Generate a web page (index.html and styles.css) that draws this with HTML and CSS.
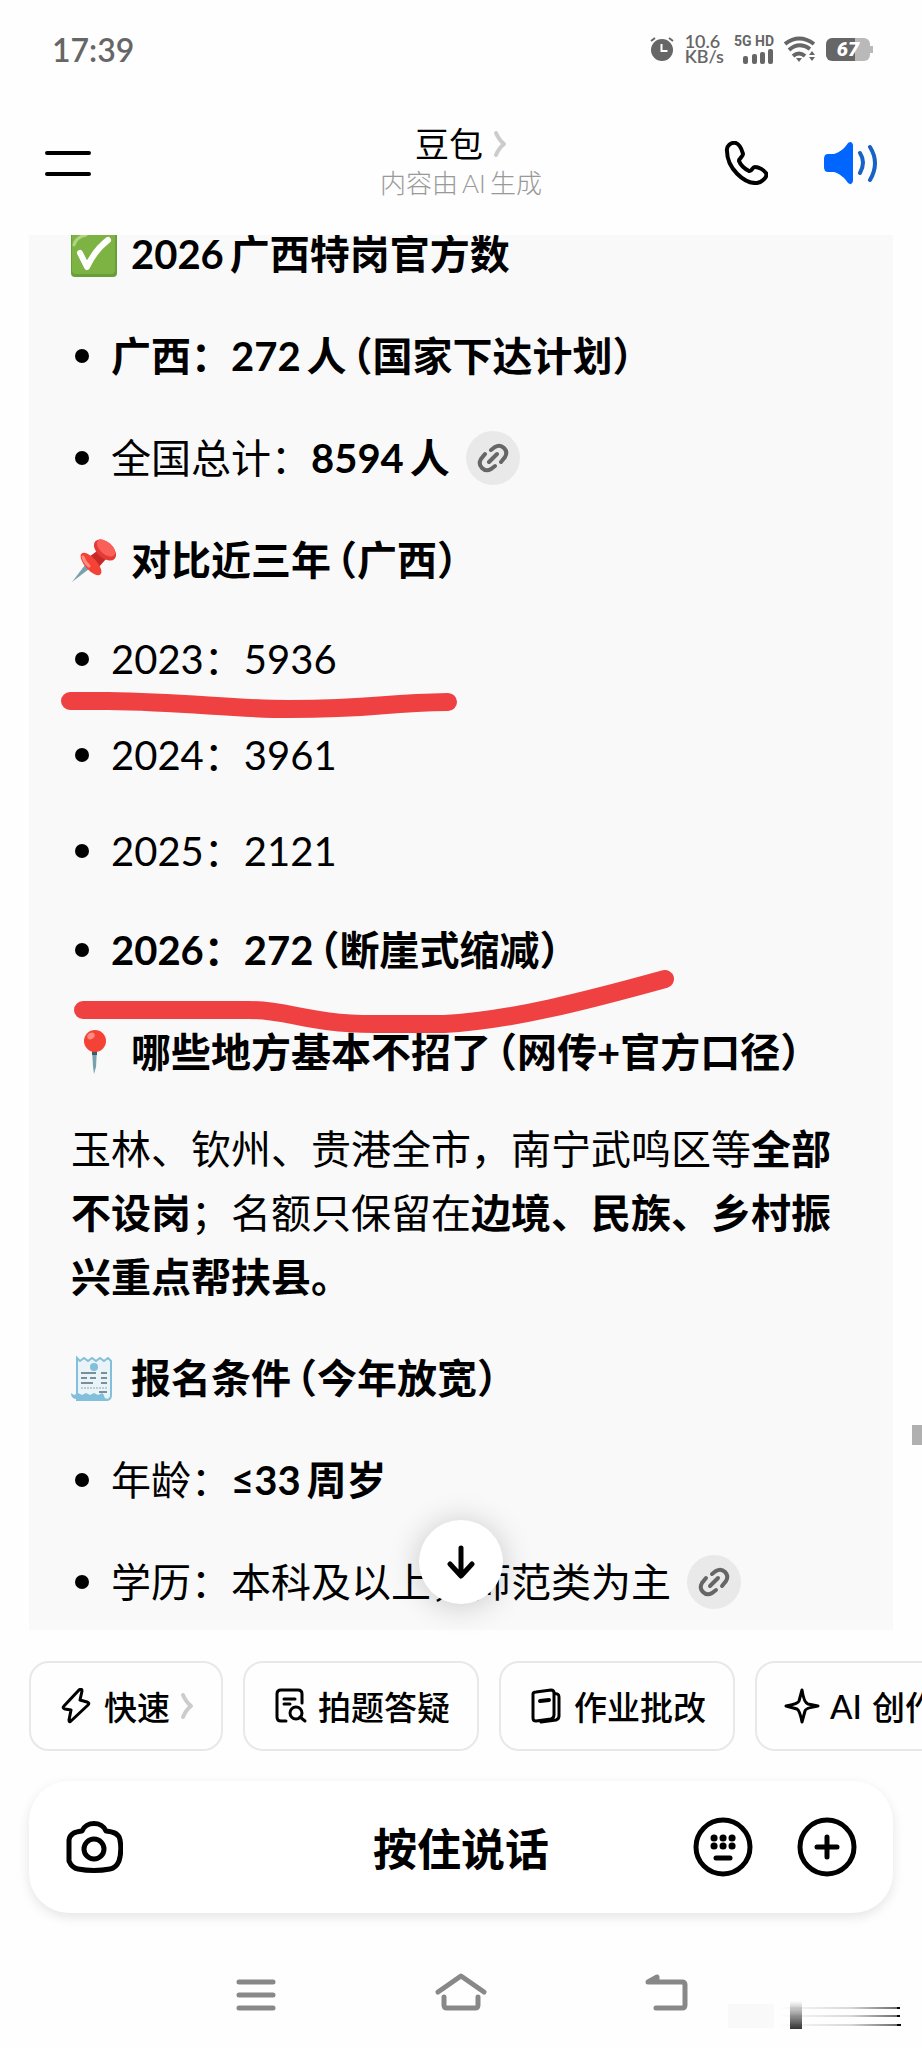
FILE: index.html
```
<!DOCTYPE html>
<html lang="zh-CN">
<head>
<meta charset="UTF-8">
<meta name="viewport" content="width=device-width, initial-scale=1">
<title>豆包</title>
<link rel="stylesheet" href="styles.css">
</head>

<body>
  <div class="statusbar">
    <span class="clock">17:39</span>
    <div class="status-icons">
      <svg width="26" height="26" viewBox="0 0 26 26">
        <circle cx="13" cy="14" r="11" fill="#666"/>
        <path d="M2 5l4-3M24 5l-4-3" stroke="#666" stroke-width="2" fill="none"/>
        <path d="M12.500 8v7h6" stroke="#fff" stroke-width="2" fill="none"/>
      </svg>
      <div class="speed"><span>10.6</span><span>KB/s</span></div>
      <div class="signal">
        <span>5G HD</span>
        <svg width="32" height="15" viewBox="0 0 32 15" fill="#666">
          <rect x="1" y="7" width="5" height="8" rx="2"/>
          <rect x="10" y="5" width="5" height="10" rx="2"/>
          <rect x="18" y="3" width="5" height="12" rx="2"/>
          <rect x="26" y="0" width="5" height="15" rx="2"/>
        </svg>
      </div>
      <svg width="32" height="26" viewBox="0 0 32 26" fill="none" stroke="#666" stroke-width="4">
        <path d="M1 8Q15-3 30 8"/>
        <path d="M5 14Q15 5 26 13"/>
        <path d="M9 20q6-5 12 0"/>
        <path d="M12 22h6l-3 4z" fill="#666" stroke="none"/>
        <path d="M25 19l3-4 3 4zM25 21h6l-3 4z" fill="#666" stroke="none"/>
      </svg>
      <div class="battery"><b>67</b></div>
    </div>
  </div>

  <header class="header">
    <button class="icon-btn" aria-label="菜单">
      <svg width="48" height="28" viewBox="0 0 48 28" stroke="#000" stroke-width="4" stroke-linecap="round">
        <path d="M3 4h42M3 25h42"/>
      </svg>
    </button>
    <div class="title">
      <h1>豆包
        <svg width="14" height="28" viewBox="0 0 14 28" fill="none" stroke="#ccc" stroke-width="4" stroke-linecap="round" stroke-linejoin="round">
          <path d="M3 3q3 7 8 11q-5 4-8 11"/>
        </svg>
      </h1>
      <p>内容由<span class="latin">AI</span>生成</p>
    </div>
    <div class="header-actions">
      <button class="icon-btn" aria-label="通话">
        <svg width="44" height="44" viewBox="0 0 44 44" fill="none" stroke="#000" stroke-width="4" stroke-linejoin="round">
          <path d="M3 10C2 5 7 1 12 2c5 2 6 8 7 11c0 3-4 4-4 7c2 5 6 8 10 10c3 1 3-4 6-4c4 0 9 3 11 6c2 4-4 9-9 10C20 43 3 27 3 10z"/>
        </svg>
      </button>
      <button class="icon-btn" aria-label="朗读">
        <svg width="54" height="44" viewBox="0 0 54 44">
          <path d="M4 13h6c6-2 11-6 14-11q4-3 5 2v36q-1 5-5 2c-3-5-8-9-14-11h-6q-4 0-4-5v-8q0-5 4-5z" fill="#06f"/>
          <path d="M36 12q6 9 0 20M46 6q10 16 0 33" fill="none" stroke="#1762c6" stroke-width="4" stroke-linecap="round"/>
        </svg>
      </button>
    </div>
  </header>

  <main class="chat">
    <div class="message">
      <div class="answer">
        <h2>
          <svg class="emoji" viewBox="0 0 46 46">
            <rect x="0" y="0" width="46" height="46" rx="4" fill="#689f38"/>
            <rect x="1" y="1" width="43" height="42" rx="4" fill="#7cb342"/>
            <path d="M3 14q2-8 12-10" stroke="#aed581" stroke-width="3" fill="none" stroke-linecap="round"/>
            <path d="M9 22l7 14Q24 19 37 9" stroke="#fff" stroke-width="6" fill="none" stroke-linecap="round" stroke-linejoin="round"/>
          </svg><span class="num">2026</span>广西特岗官方数
        </h2>
        <ul>
          <li><b>广西：<span class="num">272</span>人<span class="paren">（</span>国家下达计划<span class="paren-end">）</span></b></li>
          <li>全国总计：<b><span class="num">8594</span>人</b><a class="cite" href="#" aria-label="来源">
            <svg viewBox="0 0 54 54"><use href="#link"/></svg></a></li>
        </ul>
        <h2>
          <svg class="emoji" viewBox="0 0 46 46">
            <path d="M1 45l13-17 4 4z" fill="#78a3ad"/>
            <path d="M18 20l12-9 6 10-10 11z" fill="#c62828"/>
            <ellipse cx="20" cy="27" rx="6" ry="14" transform="rotate(-42 20 27)" fill="#f44336"/>
            <ellipse cx="34" cy="13" rx="8" ry="13" transform="rotate(-48 34 13)" fill="#e53935"/>
            <ellipse cx="35" cy="11" rx="6" ry="11" transform="rotate(-48 35 11)" fill="#f9605a"/>
            <path d="M12 20q2 6 6 9" stroke="#ff8a80" stroke-width="3" fill="none" stroke-linecap="round"/>
          </svg>对比近三年<span class="paren">（</span>广西<span class="paren-end">）</span>
        </h2>
        <ul>
          <li class="year">2023：5936</li>
          <li class="year">2024：3961</li>
          <li class="year">2025：2121</li>
          <li><b>2026：272<span class="paren">（</span>断崖式缩减<span class="paren-end">）</span></b></li>
        </ul>
        <h2>
          <svg class="emoji" viewBox="0 0 46 46">
            <path d="M21 20h5l-1 18-2 7-1-7z" fill="#78a3ad"/>
            <path d="M21 21h5v5h-5z" fill="#455a64"/>
            <circle cx="24" cy="12" r="11" fill="#f44336"/>
            <ellipse cx="20" cy="7" rx="4" ry="3" transform="rotate(-35 20 7)" fill="#ff8a80"/>
          </svg>哪些地方基本不招了<span class="paren">（</span>网传+官方口径<span class="paren-end">）</span>
        </h2>
        <p>玉林、钦州、贵港全市，南宁武鸣区等<b>全部不设岗</b>；名额只保留在<b>边境、民族、乡村振兴重点帮扶县。</b></p>
        <h2>
          <svg class="emoji" viewBox="0 0 46 46">
            <path d="M6 3l3 3 4-3 4 3 4-3 4 3 4-3 4 3 4-3 3 3v34q0 5-5 5H6z" fill="#eaf4f8" stroke="#82bfda" stroke-width="2"/>
            <path d="M0 38l3 2 4-2 4 2 4-2 4 2 4-2 4 2 4-2 2 2q0 4 4 4H6q-6 0-6-6z" fill="#82bfda"/>
            <circle cx="23" cy="12" r="4" fill="#82bfda"/>
            <path d="M10 18h15M30 18h6M10 23h6M19 23h6M30 23h6M10 28h12M30 28h6" stroke="#78909c" stroke-width="2"/>
            <path d="M10 33h26" stroke="#90a4ae" stroke-width="1" stroke-dasharray="2 1"/>
            <path d="M28 37h8" stroke="#78909c" stroke-width="2"/>
          </svg>报名条件<span class="paren">（</span>今年放宽<span class="paren-end">）</span>
        </h2>
        <ul>
          <li>年龄：<b><span class="num">≤33</span>周岁</b></li>
          <li>学历：本科及以上，师范类为主<a class="cite" href="#" aria-label="来源">
            <svg viewBox="0 0 54 54"><use href="#link"/></svg></a></li>
        </ul>
      </div>

      <!-- hand drawn marker lines -->
      <svg class="marker" width="864" height="1395" viewBox="0 0 864 1395">
        <path d="M41 466H79C160 467 200 474 260 474C350 474 350 468 419 467"/>
        <path d="M54 775H220C260 775 280 789 345 789H415C480 786 560 765 636 744"/>
      </svg>
    </div>

    <button class="to-bottom" aria-label="回到底部">
      <svg width="28" height="34" viewBox="0 0 28 34" fill="none" stroke="#000" stroke-width="5" stroke-linecap="round" stroke-linejoin="round">
        <path d="M14 3v27M3 19l11 12 11-12"/>
      </svg>
    </button>
    <div class="scroll-thumb"></div>
  </main>

  <div class="chips">
    <button class="chip">
      <svg width="36" height="36" viewBox="0 0 36 36">
        <path d="M21 2L6 18q-2 2 1 3l6 1-2 10q0 3 2 1l17-16q2-2-1-3l-7-2 2-9q0-3-3-1z"/>
      </svg>快速
      <svg class="arrow" width="14" height="28" viewBox="0 0 14 28"><path d="M3 3q3 7 8 11q-5 4-8 11"/></svg>
    </button>
    <button class="chip">
      <svg width="36" height="36" viewBox="0 0 36 36">
        <path d="M14 33H9q-4 0-4-4V6q0-4 4-4h17q4 0 4 4v9M12 11h11M12 16h6"/>
        <circle cx="24" cy="25" r="6"/><path d="M28 29l5 4"/>
      </svg>拍题答疑
    </button>
    <button class="chip">
      <svg width="36" height="36" viewBox="0 0 36 36">
        <path d="M5 6q0-2 3-2l15-2q3 0 3 3v22q0 3-3 4L8 33q-3 0-3-3zM26 6q5-1 5 3v19q0 3-3 4l-15 2"/>
        <path d="M12 13l9-1" stroke-width="4"/>
      </svg>作业批改
    </button>
    <button class="chip">
      <svg width="36" height="36" viewBox="0 0 36 36">
        <path d="M18 2q2 13 6 14l10 2q-13 2-13 5l-3 11q-2-11-5-13L2 18q12-2 13-5z"/>
      </svg><span>AI</span>创作
    </button>
  </div>

  <div class="composer">
    <button class="icon-btn" aria-label="拍照">
      <svg width="58" height="54" viewBox="0 0 58 54" fill="none" stroke="#000" stroke-width="5" stroke-linejoin="round">
        <path d="M17 11C21 1 37 1 41 11q13 1 14 9Q57 31 54 41q-3 7-9 8-16 3-32 0-6-1-9-8V20q1-8 13-9z"/>
        <circle cx="29" cy="29" r="10"/>
      </svg>
    </button>
    <button class="talk">按住说话</button>
    <div class="composer-right">
      <button class="icon-btn" aria-label="键盘">
        <svg width="60" height="60" viewBox="0 0 60 60">
          <circle cx="30" cy="30" r="27" fill="none" stroke="#000" stroke-width="5"/>
          <path d="M21 21h.1M30 21h.1M39 21h.1M21 29h.1M30 29h.1M39 29h.1" stroke="#000" stroke-width="7" stroke-linecap="round"/>
          <path d="M23 41h14" stroke="#000" stroke-width="5" stroke-linecap="round"/>
        </svg>
      </button>
      <button class="icon-btn" aria-label="更多">
        <svg width="60" height="60" viewBox="0 0 60 60" fill="none" stroke="#000" stroke-width="5" stroke-linecap="round">
          <circle cx="30" cy="30" r="27"/>
          <path d="M30 20v20M20 30h20"/>
        </svg>
      </button>
    </div>
  </div>

  <nav class="navbar">
    <button class="icon-btn" aria-label="最近任务">
      <svg width="48" height="40" viewBox="0 0 48 40"><path d="M7 9h34M7 22h34M7 35h34"/></svg>
    </button>
    <button class="icon-btn" aria-label="主页">
      <svg width="54" height="40" viewBox="0 0 54 40"><path d="M4 19L27 3l23 16M10 24v8q0 3 3 3h28q3 0 3-3v-8"/></svg>
    </button>
    <button class="icon-btn" aria-label="返回">
      <svg width="48" height="40" viewBox="0 0 48 40"><path d="M14 35h26q3 0 3-3V12q0-3-3-3H6l9-5v5"/></svg>
    </button>
  </nav>

  <svg class="smudge" width="176" height="30" viewBox="0 0 176 30">
    <defs>
      <linearGradient id="fadeX"><stop offset="0" stop-color="#000" stop-opacity="0"/><stop offset=".6" stop-color="#000" stop-opacity=".15"/><stop offset="1" stop-color="#000" stop-opacity=".6"/></linearGradient>
      <linearGradient id="fadeY" x2="0" y2="1"><stop offset="0" stop-color="#000" stop-opacity="0"/><stop offset="1" stop-color="#000" stop-opacity=".8"/></linearGradient>
    </defs>
    <path d="M0 3h46v24H0z" fill="#000" opacity=".02"/>
    <rect x="62" y="0" width="12" height="28" fill="url(#fadeY)"/>
    <path d="M50 6h120v2H50zM50 14h120v2H50zM50 23h121v2H50z" fill="url(#fadeX)"/>
    <path d="M169 6h3v2h-3zM169 14h3v2h-3zM169 23h4v2h-4z"/>
  </svg>

  <svg class="sprite">
    <symbol id="link" viewBox="0 0 54 54">
      <g fill="none" stroke="#666" stroke-width="4" stroke-linecap="round">
        <path d="M25 19l4-3q5-3 9 1t1 9l-4 5M29 35l-4 3q-5 3-9-1t-1-9l4-5M23 31l8-8"/>
      </g>
    </symbol>
  </svg>
</body>
</html>
```
FILE: styles.css
```
* {
  box-sizing: border-box;
}

body {
  margin: 0;
  background: #fefefe;
  color: #000;
  font-family: Lato, "Noto Sans CJK SC", sans-serif;
  overflow-x: hidden;
}

button {
  border: none;
  background: none;
  padding: 0;
  color: inherit;
  font-family: inherit;
}
svg {
  display: block;
  flex: none;
}
h1, h2, p, ul {
  margin: 0;
  padding: 0;
}

/* status bar */
.statusbar {
  display: flex;
  justify-content: space-between;
  align-items: center;
  height: 98px;
  padding: 0 52px;
  color: #666;
}
.clock {
  font-size: 32px;
  font-weight: 600;
}
.status-icons {
  display: flex;
  align-items: center;
  gap: 10px;
}
.speed, .signal {
  display: flex;
  flex-direction: column;
  line-height: 15px;
}
.speed {
  font-size: 18px;
  font-weight: 600;
}
.signal {
  align-items: flex-end;
  font-family: Roboto, sans-serif;
  font-size: 14px;
  font-weight: bold;
}
.battery {
  position: relative;
  width: 44px;
  height: 23px;
  border-radius: 6px;
  background: linear-gradient(to right, #666 67%, #b9b9b9 67%);
  color: #fff;
  font: italic bold 20px/23px Roboto, sans-serif;
  text-align: center;
}
.battery:after {
  content: "";
  position: absolute;
  left: 44px;
  top: 8px;
  width: 3px;
  height: 7px;
  background: #b9b9b9;
}

/* header */
.header {
  display: grid;
  grid-template-columns: 1fr auto 1fr;
  align-items: center;
  height: 137px;
  padding: 0 44px 8px;
}
.icon-btn {
  justify-self: start;
}
.title {
  text-align: center;
}
.title h1 {
  display: flex;
  justify-content: center;
  align-items: center;
  gap: 10px;
  font-size: 34px;
  line-height: 40px;
  font-weight: 400;
}
.title p {
  color: #999;
  font-size: 26px;
  line-height: 38px;
  font-weight: 300;
}
.latin {
  margin: 0 4px;
}
.header-actions {
  justify-self: end;
  display: flex;
  gap: 56px;
}

/* chat */
.chat {
  position: relative;
  padding: 0 29px;
}
.message {
  position: relative;
  overflow: hidden;
  background: #f9f9f9;
  padding: 0 42px 17px;
}
.answer {
  margin-top: -12px;
  font-size: 40px;
  line-height: 62px;
}
.answer h2, .answer ul {
  margin-bottom: 40px;
}
.answer ul:last-child {
  margin-bottom: 0;
}
.answer h2 {
  display: flex;
  align-items: center;
  font-size: 40px;
  font-weight: bold;
}
.answer b {
  font-weight: bold;
}
.answer ul {
  display: flex;
  flex-direction: column;
  gap: 40px;
  list-style: none;
}
.answer li {
  display: flex;
  align-items: center;
}
.answer li:before {
  content: "";
  width: 14px;
  height: 14px;
  margin: 0 22px 0 4px;
  border-radius: 50%;
  background: #000;
}
.answer .year {
  line-height: 56px;
}
.answer p {
  margin: -6px 0 38px;
  line-height: 64px;
}
.emoji {
  width: 46px;
  height: 46px;
  margin-right: 14px;
}
.num {
  margin-right: 6px;
}
.paren, .paren-end {
  font-feature-settings: "halt";
}
.paren {
  margin-left: 6px;
}
.cite {
  margin-left: 16px;
  width: 54px;
  height: 54px;
  border-radius: 50%;
  background: #e9e9e9;
}
.marker {
  position: absolute;
  left: 0;
  top: 0;
  fill: none;
  stroke: #ef4142;
  stroke-width: 18px;
  stroke-linecap: round;
}
.to-bottom {
  position: absolute;
  left: 50%;
  bottom: 26px;
  width: 84px;
  height: 84px;
  margin-left: -42px;
  display: flex;
  align-items: center;
  justify-content: center;
  border-radius: 50%;
  background: #fff;
  box-shadow: 0 2px 32px rgba(0, 0, 0, .2);
}
.scroll-thumb {
  position: absolute;
  right: 0;
  bottom: 185px;
  width: 10px;
  height: 20px;
  background: #b0b0b0;
}

/* quick actions */
.chips {
  display: flex;
  gap: 20px;
  padding: 31px 0 30px 29px;
  overflow: hidden;
}
.chip {
  flex: none;
  display: flex;
  align-items: center;
  gap: 10px;
  height: 90px;
  padding: 0 27px;
  border: 2px solid #e8e8e8;
  border-radius: 20px;
  font-size: 33px;
  font-weight: 500;
}
.chip svg {
  fill: none;
  stroke: #000;
  stroke-width: 3px;
  stroke-linecap: round;
  stroke-linejoin: round;
}
.chip .arrow {
  stroke: #ccc;
  stroke-width: 4px;
}

/* composer */
.composer {
  display: grid;
  grid-template-columns: 1fr auto 1fr;
  align-items: center;
  height: 132px;
  margin: 0 29px;
  padding: 0 36px;
  border-radius: 40px;
  background: #fff;
  box-shadow: 0 4px 12px rgba(0, 0, 0, .1);
}
.talk {
  font-size: 44px;
  font-weight: bold;
}
.composer-right {
  justify-self: end;
  display: flex;
  gap: 44px;
}

/* system navigation */
.navbar {
  display: flex;
  justify-content: center;
  gap: 154px;
  padding: 60px 0 34px;
}
.navbar svg {
  fill: none;
  stroke: #888;
  stroke-width: 5px;
  stroke-linecap: round;
  stroke-linejoin: round;
}
.smudge {
  position: absolute;
  left: 728px;
  top: 2001px;
}
.sprite {
  display: none;
}
```
